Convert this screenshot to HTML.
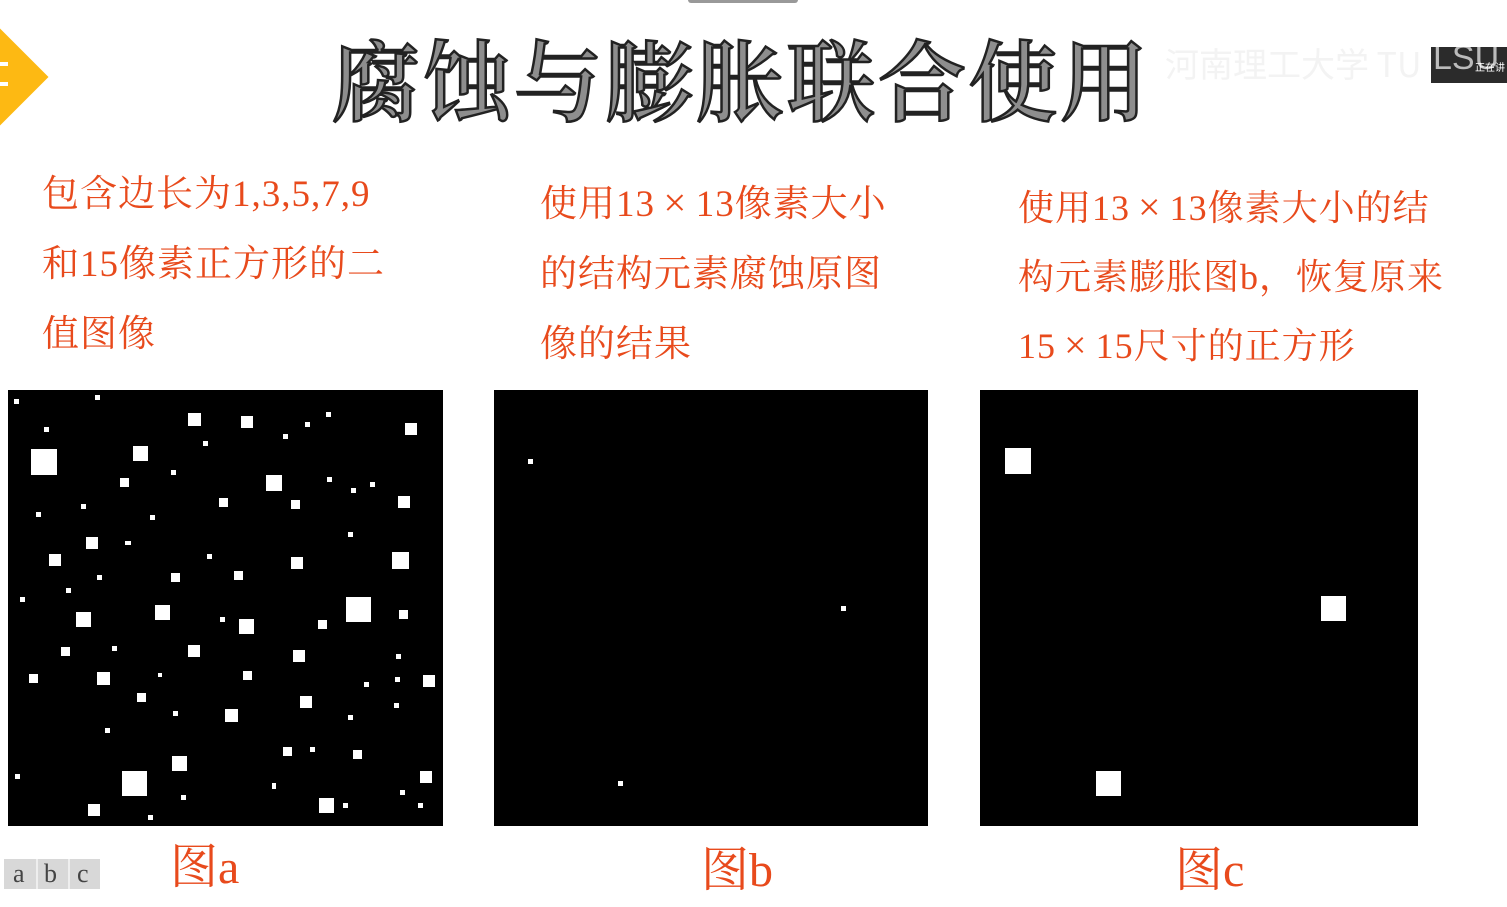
<!DOCTYPE html>
<html><head><meta charset="utf-8"><style>
html,body{margin:0;padding:0;background:#fff;}
body{width:1507px;height:907px;position:relative;overflow:hidden;font-family:"Liberation Serif","Noto Serif CJK SC",serif;}
.t{position:absolute;color:#e84a1c;font-size:37px;line-height:44px;white-space:nowrap;letter-spacing:1px;}
.x{display:inline-block;width:1em;text-align:center;font-size:1.1em;line-height:1;}
.img{position:absolute;background:#000;}
.lab{position:absolute;color:#e84a1c;font-size:48px;line-height:50px;white-space:nowrap;}
</style></head><body>
<div style="position:absolute;left:-36px;top:42px;width:70px;height:70px;background:#fdb913;transform:rotate(45deg);"></div>
<div style="position:absolute;left:0;top:62px;width:8px;height:4px;background:#fff"></div>
<div style="position:absolute;left:0;top:82px;width:8px;height:4px;background:#fff"></div>
<div style="position:absolute;left:688px;top:0;width:110px;height:3px;background:#999;border-radius:0 0 3px 3px"></div>
<div style="position:absolute;left:332px;top:22px;font-family:'Noto Serif CJK SC',serif;font-size:88px;line-height:110px;color:#8e8e8e;-webkit-text-stroke:2.5px #222;font-weight:600;letter-spacing:3px;white-space:nowrap;">腐蚀与膨胀联合使用</div>
<div style="position:absolute;left:1165px;top:38px;font-family:'Noto Sans CJK SC',sans-serif;font-size:34px;color:#f3f3f3;white-space:nowrap;">河南理工大学 TU</div>
<div style="position:absolute;left:1431px;top:47px;width:76px;height:36px;background:#2b2b2b;overflow:hidden;">
<div style="position:absolute;left:2px;top:-8px;font-family:'Liberation Sans',sans-serif;font-size:34px;color:#bbb;">LSU</div>
<div style="position:absolute;left:44px;top:12px;font-size:10px;color:#fff;font-family:'Noto Sans CJK SC',sans-serif;white-space:nowrap;">正在讲</div></div>

<div class="t" style="left:42px;top:173px;">包含边长为1,3,5,7,9</div>
<div class="t" style="left:42px;top:243px;">和15像素正方形的二</div>
<div class="t" style="left:42px;top:313px;">值图像</div>
<div class="t" style="left:540px;top:183px;">使用13<span class="x">×</span>13像素大小</div>
<div class="t" style="left:540px;top:253px;">的结构元素腐蚀原图</div>
<div class="t" style="left:540px;top:323px;">像的结果</div>
<div class="t" style="left:1018px;top:186px;font-size:36px;">使用13<span class="x">×</span>13像素大小的结</div>
<div class="t" style="left:1018px;top:255px;font-size:36px;">构元素膨胀图b，恢复原来</div>
<div class="t" style="left:1018px;top:324px;font-size:36px;">15<span class="x">×</span>15尺寸的正方形</div>

<svg class="img" style="left:8px;top:390px" width="435" height="436" viewBox="8 390 435 436">
<rect x="8" y="390" width="435" height="436" fill="#000"/>
<g fill="#fff">
<rect x="31" y="449" width="26" height="26"/><rect x="133" y="446" width="15" height="15"/><rect x="188" y="413" width="13" height="13"/><rect x="241" y="416" width="12" height="12"/><rect x="405" y="423" width="12" height="12"/><rect x="266" y="475" width="16" height="16"/><rect x="120" y="478" width="9" height="9"/><rect x="219" y="498" width="9" height="9"/><rect x="291" y="500" width="9" height="9"/><rect x="398" y="496" width="12" height="12"/><rect x="86" y="537" width="12" height="12"/><rect x="49" y="554" width="12" height="12"/><rect x="291" y="557" width="12" height="12"/><rect x="392" y="552" width="17" height="17"/><rect x="171" y="573" width="9" height="9"/><rect x="234" y="571" width="9" height="9"/><rect x="346" y="597" width="25" height="25"/><rect x="76" y="612" width="15" height="15"/><rect x="155" y="605" width="15" height="15"/><rect x="239" y="619" width="15" height="15"/><rect x="318" y="620" width="9" height="9"/><rect x="399" y="610" width="9" height="9"/><rect x="61" y="647" width="9" height="9"/><rect x="188" y="645" width="12" height="12"/><rect x="293" y="650" width="12" height="12"/><rect x="29" y="674" width="9" height="9"/><rect x="97" y="672" width="13" height="13"/><rect x="243" y="671" width="9" height="9"/><rect x="423" y="675" width="12" height="12"/><rect x="137" y="693" width="9" height="9"/><rect x="300" y="696" width="12" height="12"/><rect x="225" y="709" width="13" height="13"/><rect x="172" y="756" width="15" height="15"/><rect x="122" y="771" width="25" height="25"/><rect x="283" y="747" width="9" height="9"/><rect x="353" y="750" width="9" height="9"/><rect x="420" y="771" width="12" height="12"/><rect x="319" y="798" width="15" height="15"/><rect x="88" y="804" width="12" height="12"/>
</g>
<g fill="#fff">
<rect x="14" y="399" width="5" height="5"/><rect x="95" y="395" width="5" height="5"/><rect x="44" y="427" width="5" height="5"/><rect x="326" y="412" width="5" height="5"/><rect x="305" y="422" width="5" height="5"/><rect x="283" y="434" width="5" height="5"/><rect x="203" y="441" width="5" height="5"/><rect x="171" y="470" width="5" height="5"/><rect x="327" y="477" width="5" height="5"/><rect x="351" y="488" width="5" height="5"/><rect x="370" y="482" width="5" height="5"/><rect x="36" y="512" width="5" height="5"/><rect x="81" y="504" width="5" height="5"/><rect x="150" y="515" width="5" height="5"/><rect x="348" y="532" width="5" height="5"/><rect x="125" y="541" width="6" height="4"/><rect x="207" y="554" width="5" height="5"/><rect x="97" y="575" width="5" height="5"/><rect x="66" y="588" width="5" height="5"/><rect x="20" y="597" width="5" height="5"/><rect x="220" y="617" width="5" height="5"/><rect x="112" y="646" width="5" height="5"/><rect x="396" y="654" width="5" height="5"/><rect x="158" y="673" width="4" height="4"/><rect x="395" y="677" width="5" height="5"/><rect x="364" y="682" width="5" height="5"/><rect x="394" y="703" width="5" height="5"/><rect x="173" y="711" width="5" height="5"/><rect x="348" y="715" width="5" height="5"/><rect x="105" y="728" width="5" height="5"/><rect x="310" y="747" width="5" height="5"/><rect x="15" y="774" width="5" height="5"/><rect x="272" y="783" width="4" height="6"/><rect x="181" y="795" width="5" height="5"/><rect x="400" y="790" width="5" height="5"/><rect x="343" y="803" width="5" height="5"/><rect x="418" y="803" width="5" height="5"/><rect x="148" y="815" width="5" height="5"/>
</g></svg>

<div class="img" style="left:494px;top:390px;width:434px;height:436px;">
<div style="position:absolute;left:34px;top:69px;width:5px;height:5px;background:#fff"></div>
<div style="position:absolute;left:347px;top:216px;width:5px;height:5px;background:#fff"></div>
<div style="position:absolute;left:124px;top:391px;width:5px;height:5px;background:#fff"></div>
</div>
<div class="img" style="left:980px;top:390px;width:438px;height:436px;">
<div style="position:absolute;left:25px;top:58px;width:26px;height:26px;background:#fff"></div>
<div style="position:absolute;left:341px;top:206px;width:25px;height:25px;background:#fff"></div>
<div style="position:absolute;left:116px;top:381px;width:25px;height:25px;background:#fff"></div>
</div>

<div style="position:absolute;left:4px;top:859px;width:96px;height:30px;background:#d8d8d8;font-size:26px;color:#444;line-height:30px;">
<span style="position:absolute;left:9px">a</span><span style="position:absolute;left:40px">b</span><span style="position:absolute;left:73px">c</span>
<span style="position:absolute;left:32px;top:0;width:2px;height:30px;background:#eee"></span><span style="position:absolute;left:64px;top:0;width:2px;height:30px;background:#eee"></span></div>
<div class="lab" style="left:170px;top:843px;">图a</div>
<div class="lab" style="left:701px;top:846px;">图b</div>
<div class="lab" style="left:1175px;top:846px;">图c</div>
</body></html>
